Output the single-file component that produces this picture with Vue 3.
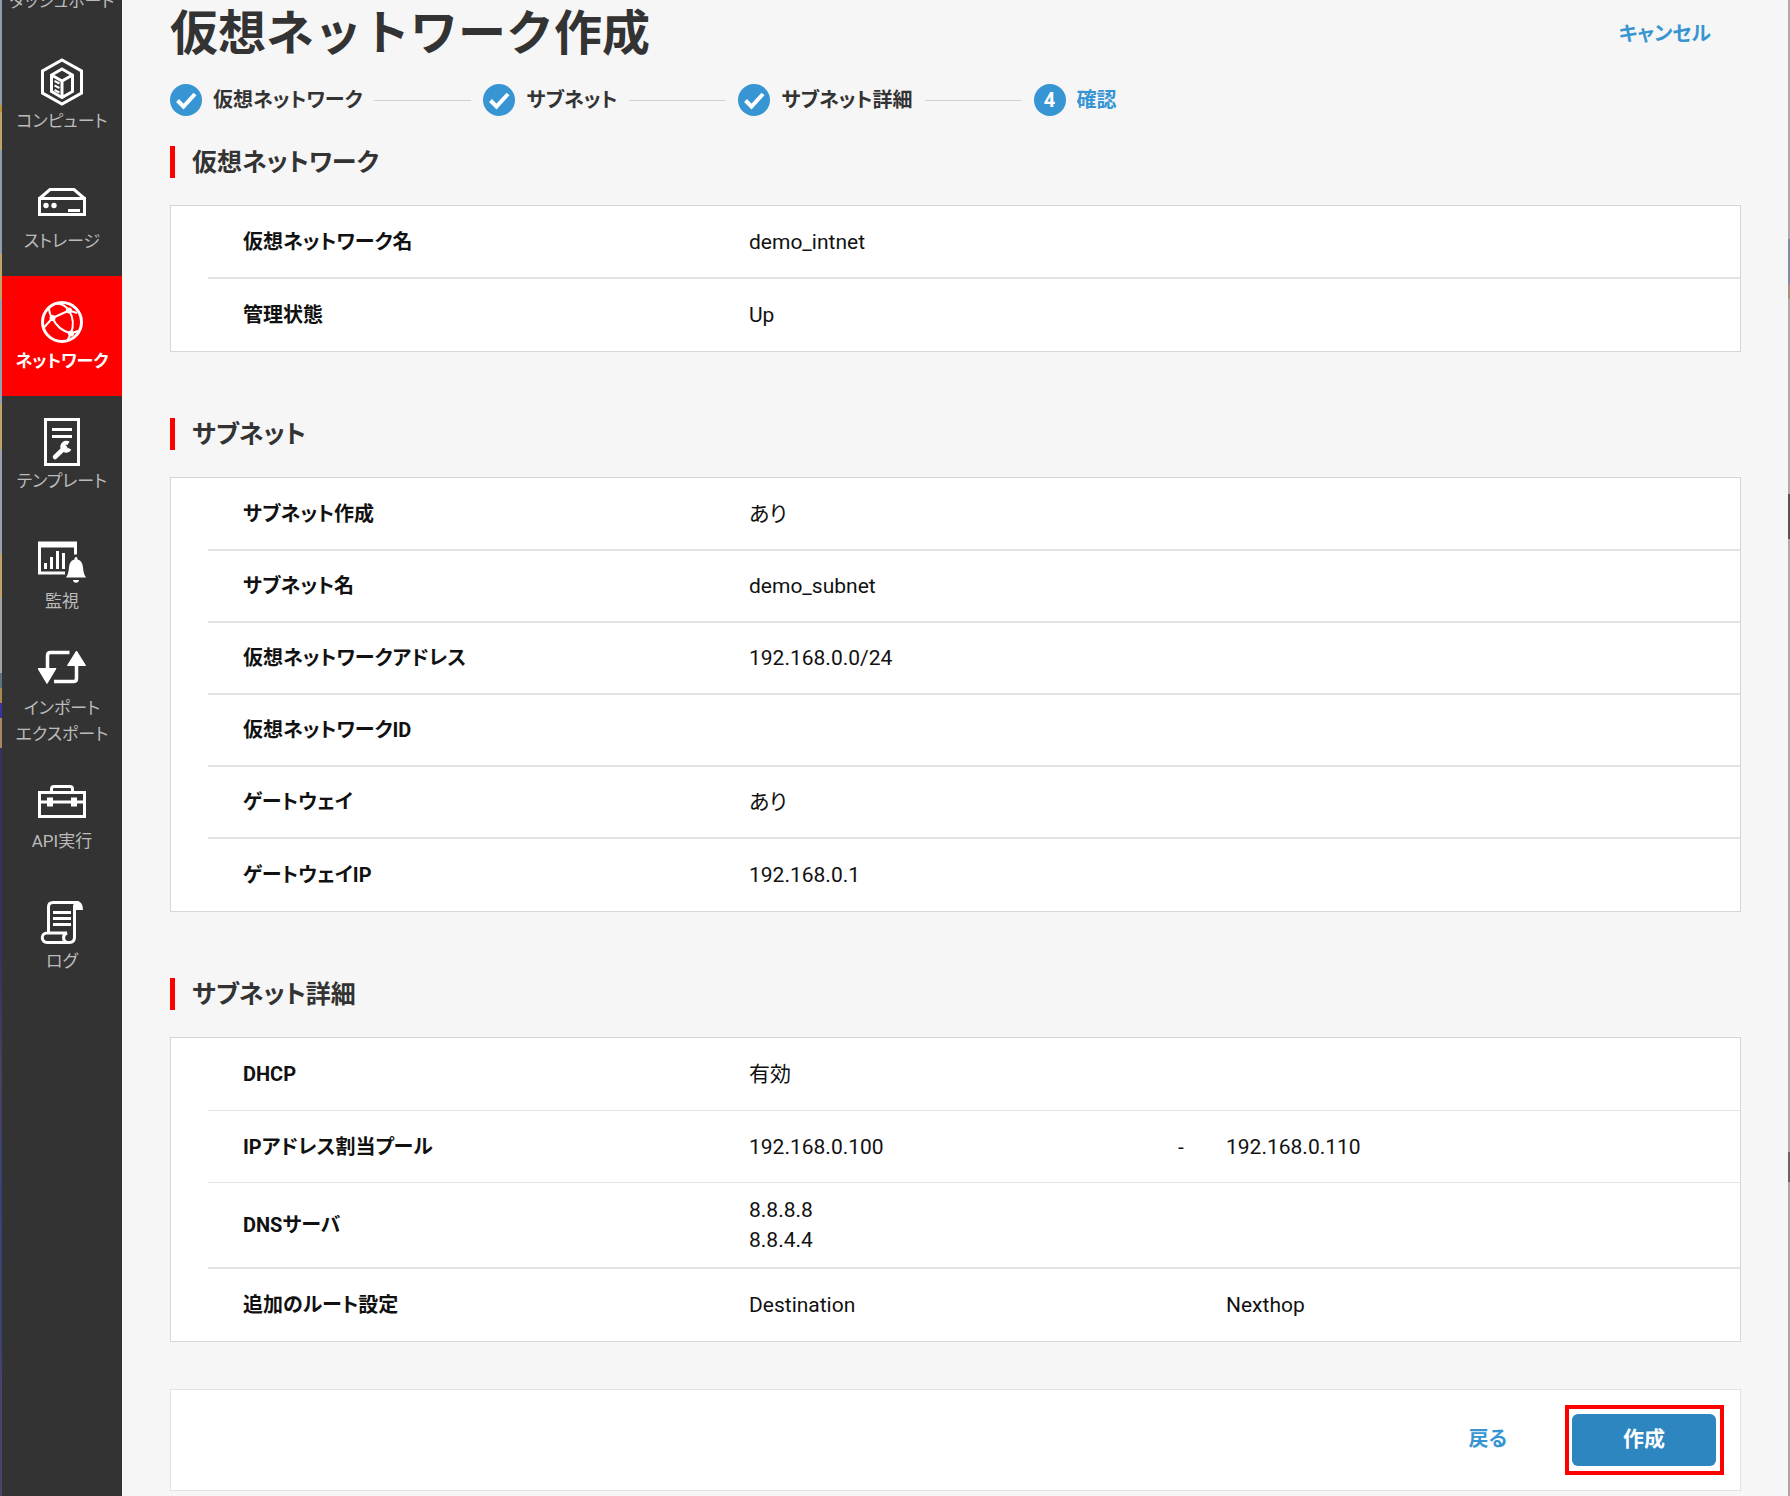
<script setup>
const navItems = [
  { icon: 'none', lines: ['ダッシュボード'] },
  { icon: 'compute', lines: ['コンピュート'] },
  { icon: 'storage', lines: ['ストレージ'] },
  { icon: 'network', lines: ['ネットワーク'], active: true },
  { icon: 'template', lines: ['テンプレート'] },
  { icon: 'monitor', lines: ['監視'] },
  { icon: 'transfer', lines: ['インポート', 'エクスポート'] },
  { icon: 'api', lines: ['API実行'] },
  { icon: 'log', lines: ['ログ'] },
]

const steps = [
  { label: '仮想ネットワーク', done: true },
  { label: 'サブネット', done: true },
  { label: 'サブネット詳細', done: true },
  { label: '確認', done: false },
]

const sections = [
  {
    title: '仮想ネットワーク',
    rows: [
      { label: '仮想ネットワーク名', values: ['demo_intnet'] },
      { label: '管理状態', values: ['Up'] },
    ],
  },
  {
    title: 'サブネット',
    rows: [
      { label: 'サブネット作成', values: ['あり'] },
      { label: 'サブネット名', values: ['demo_subnet'] },
      { label: '仮想ネットワークアドレス', values: ['192.168.0.0/24'] },
      { label: '仮想ネットワークID', values: [] },
      { label: 'ゲートウェイ', values: ['あり'] },
      { label: 'ゲートウェイIP', values: ['192.168.0.1'] },
    ],
  },
  {
    title: 'サブネット詳細',
    rows: [
      { label: 'DHCP', values: ['有効'], thin: true },
      { label: 'IPアドレス割当プール', range: ['192.168.0.100', '-', '192.168.0.110'], thin: true },
      { label: 'DNSサーバ', values: ['8.8.8.8', '8.8.4.4'] },
      { label: '追加のルート設定', range: ['Destination', '', 'Nexthop'] },
    ],
  },
]
</script>

<template>
  <div class="app">
    <div class="edge edge-left"></div>
    <nav class="sidebar">
      <ul>
        <li v-for="item in navItems" :key="item.icon">
          <a href="#" class="nav-item" :class="{ active: item.active }">
            <svg class="nav-icon" width="48" height="48" viewBox="0 0 48 48" fill="none" stroke="#fff" stroke-width="3" aria-hidden="true">
              <g v-if="item.icon === 'compute'">
                <path d="M24 2 43.500 13v22L24 46 4.500 35V13z" />
                <path d="M24 11 34.500 17v16.500L24 39.500 13.500 33.500V17zM13.500 17 24 23l10.500-6M24 23v16" />
                <path d="m16.500 23 5 2.500M16.500 27.500l5 2.500M16.500 32l5 2.500" stroke-width="2" />
              </g>
              <g v-else-if="item.icon === 'storage'">
                <path d="M1.500 20.500h45v16h-45zM1.500 20.500 12 11.500h24l10.500 9" />
                <circle cx="8" cy="27.500" r="2.700" fill="#fff" stroke="none" />
                <circle cx="16" cy="27.500" r="2.700" fill="#fff" stroke="none" />
                <path d="M30 32.500h12" />
              </g>
              <g v-else-if="item.icon === 'network'">
                <circle cx="24" cy="24" r="19.500" />
                <path d="M11 9.500C11 14 12 17 14.500 20M14.500 20 31 12.500M31 12.500C28 8 23 5 17 5.500M31 12.500l8 2.500M31 12.500c5 8 5 15 2 23M33 35.500C24 33 18 28 14.500 20M14.500 20 6 29.500M33 35.500 29 43M33 35.500l7-2.500" stroke-width="2" />
                <circle cx="14.500" cy="20" r="3" fill="#fff" stroke="none" />
                <circle cx="31" cy="12.500" r="3" fill="#fff" stroke="none" />
                <circle cx="33" cy="35.500" r="3" fill="#fff" stroke="none" />
              </g>
              <g v-else-if="item.icon === 'template'">
                <path d="M7.500 1.500h33v45h-33zM14 11.500h20M14 18.500h20" />
                <path d="M17 39 27 29.500" stroke-width="4.500" stroke-linecap="round" />
                <path d="M30.500 25.300a4 4 0 1 0 1.200 5.500" stroke-width="4" />
              </g>
              <g v-else-if="item.icon === 'monitor'">
                <path d="M0 3.500h39v13h-3V9.500H3v24h24v3H0z" fill="#fff" stroke="none" />
                <path d="M7.500 31v-6M13.500 31V19M19.500 31V13M25.500 31V15" />
                <path d="M38 19c-1.500 0-1.500 1.500-1.500 2.500-4 1-5 4-5.500 8-.3 4-1 7-3 10h20c-2-3-2.700-6-3-10-.5-4-1.500-7-5.500-8 0-1 0-2.500-1.500-2.500zM35 42h6c0 3.500-6 3.500-6 0z" fill="#fff" stroke="none" />
              </g>
              <g v-else-if="item.icon === 'transfer'">
                <path d="M9.500 26V10.500q0-3 3-3h19M38.500 20v13.500q0 3-3 3H16" stroke-width="3.500" />
                <path d="M0 23.500h18l-9 15zM29.500 20.500h18L38.500 6z" fill="#fff" stroke="#fff" stroke-width="1" stroke-linejoin="round" />
              </g>
              <g v-else-if="item.icon === 'api'">
                <path d="M1.500 14.500h45v24h-45zM13.500 14v-3q0-2.500 2.500-2.500h16q2.500 0 2.500 2.500v3M2 24h44" />
                <path d="M9 19.500h6v9H9zM33 19.500h6v9h-6z" fill="#fff" stroke="none" />
              </g>
              <g v-else-if="item.icon === 'log'">
                <path d="M10.500 34V9q0-4.500 4.500-4.500h24M41 4.500q-4.500 0-4.500 5V39q0 5.500-5 5.500H9a4.500 4.500 0 0 1 0-9.500h20a5 5 0 0 0 0 9.500" />
                <path d="M38 3q7 0 7 9h-7z" fill="#fff" stroke="none" />
                <path d="M15 14.500h18M15 20.500h18M15 26.500h18" />
              </g>
            </svg>
            <span v-for="line in item.lines" :key="line" class="nav-label">{{ line }}</span>
          </a>
        </li>
      </ul>
    </nav>

    <main class="content">
      <header class="page-head">
        <h1>仮想ネットワーク作成</h1>
        <a href="#" class="text-link cancel">キャンセル</a>
      </header>

      <ol class="steps">
        <li v-for="(step, i) in steps" :key="step.label" class="step" :class="{ current: !step.done }">
          <span class="badge">
            <svg v-if="step.done" width="32" height="32" viewBox="0 0 32 32" fill="none" stroke="#fff" stroke-width="4" aria-hidden="true">
              <path d="m7.500 16.500 6 6 11.500-12.500" />
            </svg>
            <template v-else>{{ i + 1 }}</template>
          </span>
          <span class="step-label">{{ step.label }}</span>
        </li>
      </ol>

      <section v-for="section in sections" :key="section.title" class="section">
        <h2>{{ section.title }}</h2>
        <div class="card">
          <table>
            <colgroup>
              <col class="col-label" />
              <col class="col-value" />
              <col class="col-dash" />
              <col />
            </colgroup>
            <tbody>
              <tr v-for="row in section.rows" :key="row.label" :class="{ thin: row.thin }">
                <th scope="row">{{ row.label }}</th>
                <template v-if="row.range">
                  <td v-for="(cell, c) in row.range" :key="c">{{ cell }}</td>
                </template>
                <td v-else colspan="3">
                  <div v-for="value in row.values" :key="value">{{ value }}</div>
                </td>
              </tr>
            </tbody>
          </table>
        </div>
      </section>

      <footer class="actions">
        <button type="button" class="text-link back">戻る</button>
        <div class="highlight">
          <button type="button" class="primary">作成</button>
        </div>
      </footer>
    </main>
    <div class="edge edge-right"></div>
  </div>
</template>

<style>
body {
  margin: 0;
  background: #f6f6f6;
}
</style>

<style scoped>
.app {
  display: flex;
  min-height: 100vh;
  overflow: hidden;
  font-family: Roboto, "Noto Sans CJK JP", sans-serif;
  font-size: 21px;
  line-height: 30px;
  color: #111;
  background: #f6f6f6;
}
.app * {
  box-sizing: border-box;
}
.edge {
  flex: none;
  width: 2px;
}
.edge-left {
  background: linear-gradient(
    #8f9fb0 0 7%,
    #b8923a 7% 7.5%,
    #c0a468 7.5% 10%,
    #8f9fb0 10% 17%,
    #c0a468 17% 20%,
    #93a0ad 20% 27%,
    #c0a468 27% 30%,
    #9aa3ab 30% 37%,
    #c0a468 37% 40%,
    #9fa5aa 40% 45%,
    #5b7482 45% 46%,
    #a98a4c 46% 47%,
    #3b34a0 47% 48%,
    #a8885c 48% 50%,
    #33335f 50% 64%,
    #4a4260 72%,
    #34427a 80%,
    #4c4468 100%
  );
}
.edge-right {
  background: linear-gradient(
    #ababab 0 16%,
    #7f8cab 16% 19%,
    #a8917c 19% 20%,
    #ababab 20% 33%,
    #555 33% 36%,
    #ababab 36% 77%,
    #666 77% 79%,
    #a6a6a6 79% 100%
  );
}
.sidebar {
  flex: none;
  width: 120px;
  background: #333;
}
.sidebar ul {
  list-style: none;
  margin: -84px 0 0;
  padding: 0;
}
.nav-item {
  display: flex;
  flex-direction: column;
  align-items: center;
  justify-content: center;
  height: 120px;
  color: #bbb;
  font-size: 17px;
  line-height: 26px;
  text-decoration: none;
  font-feature-settings: "palt";
}
.nav-item.active {
  background: #f00;
  color: #fff;
  font-weight: 700;
}
.nav-icon {
  flex: none;
  margin-bottom: 2px;
}
.nav-label {
  white-space: nowrap;
}
.content {
  flex: 1;
  min-width: 0;
  padding: 0 47px 4px 48px;
}
.page-head {
  display: flex;
  align-items: center;
  justify-content: space-between;
  height: 68px;
}
h1 {
  margin: 0;
  color: #333;
  font-size: 48px;
  line-height: 68px;
}
.text-link {
  color: #3895d3;
  font-family: inherit;
  font-size: 20px;
  font-weight: 700;
  text-decoration: none;
  background: none;
  border: 0;
  padding: 0;
  font-feature-settings: "palt";
}
.cancel {
  margin-right: 30px;
}
.steps {
  display: flex;
  align-items: center;
  list-style: none;
  margin: 16px 0 30px;
  padding: 0;
  color: #333;
  font-size: 20px;
  font-weight: 700;
  font-feature-settings: "palt";
}
.step {
  display: flex;
  align-items: center;
  height: 32px;
}
.step:not(:last-child)::after {
  content: "";
  width: 97px;
  height: 1px;
  margin: 0 12px;
  background: #d0d0d0;
}
.badge {
  display: flex;
  align-items: center;
  justify-content: center;
  width: 32px;
  height: 32px;
  margin-right: 11px;
  border-radius: 50%;
  background: #3895d3;
  color: #fff;
}
.current {
  color: #3895d3;
}
.section {
  margin-bottom: 66px;
}
.section:last-of-type {
  margin-bottom: 47px;
}
h2 {
  margin: 0 0 27px;
  padding: 2px 0 0 17px;
  border-left: 5px solid #f00;
  color: #333;
  font-size: 25px;
  line-height: 30px;
  font-feature-settings: "palt";
}
.card {
  padding-left: 37px;
  background: #fff;
  border: 1px solid #d6d6d6;
}
table {
  width: 100%;
  table-layout: fixed;
  border-spacing: 0;
}
.col-label {
  width: 541px;
}
.col-value {
  width: 429px;
}
.col-dash {
  width: 48px;
}
th,
td {
  height: 72px;
  padding: 12px 0;
  text-align: left;
  font-feature-settings: "palt";
  border-bottom: 2px solid #e4e4e4;
}
th {
  padding-left: 35px;
  font-size: 20px;
}
.thin th,
.thin td {
  border-bottom-width: 1px;
}
tr:first-child th,
tr:first-child td {
  height: 73px;
}
tr:last-child th,
tr:last-child td {
  border-bottom: 0;
}
.actions {
  display: flex;
  align-items: center;
  justify-content: flex-end;
  height: 102px;
  padding-right: 16px;
  background: #fff;
  border: 1px solid #e2e2e2;
}
.back {
  margin-right: 58px;
  padding-bottom: 6px;
}
.highlight {
  padding: 5px 4px 5px 3px;
  border: 4px solid #f00;
}
.primary {
  display: block;
  width: 144px;
  height: 52px;
  padding: 0 0 6px;
  border: 0;
  border-radius: 6px;
  background: #2d86c0;
  color: #fff;
  font-family: inherit;
  font-size: 21px;
  font-weight: 700;
}
</style>
